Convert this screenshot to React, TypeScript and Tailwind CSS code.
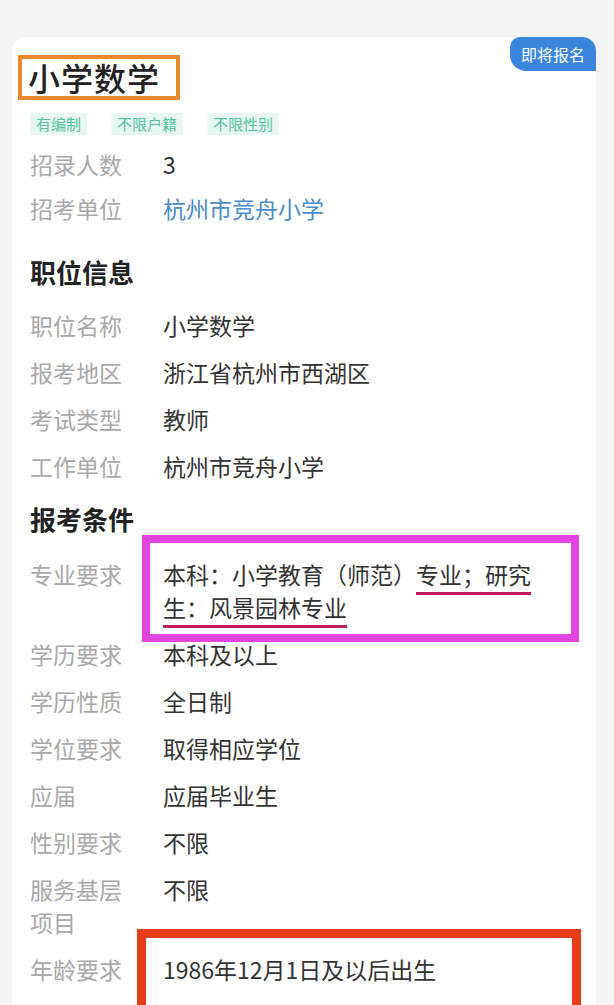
import { ReactNode } from "react";

const FONT = "font-['Noto_Sans_CJK_SC','Noto_Sans',sans-serif]";

function Row({
  label,
  children,
  className = "",
  overlay,
}: {
  label: string;
  children: ReactNode;
  className?: string;
  overlay?: ReactNode;
}) {
  return (
    <div className={`relative flex text-[23px] leading-[33px] ${className}`}>
      <div className="w-[96px] shrink-0 text-[#a8a8a8]">{label}</div>
      <div className="ml-[37px] w-[380px] text-[#333333]">{children}</div>
      {overlay}
    </div>
  );
}

const tags = ["有编制", "不限户籍", "不限性别"];

export default function App() {
  return (
    <div className={`min-h-screen overflow-hidden bg-[#f4f4f4] pl-[12px] pr-[18px] pt-[37px] ${FONT}`}>
      <div className="relative rounded-t-[14px] bg-white pb-10 pl-[18px]">
        {/* Top-right status badge */}
        <div className="absolute right-0 top-0 flex h-[34px] w-[86px] items-center justify-center rounded-tr-[14px] rounded-tl-[10px] rounded-bl-[16px] bg-[#3a86df] text-[16px] text-white">
          即将报名
        </div>

        {/* Title */}
        <div className="pt-[20px]">
          <div className="relative inline-block">
            <h1 className="ml-[-2px] text-[32px] font-medium leading-[40px] tracking-[1px] text-[#222222]">
              小学数学
            </h1>
            <div className="absolute left-[-12px] top-[-2px] h-[45px] w-[162px] border-[4px] border-[#e8892c]" />
          </div>
        </div>

        <div className="mt-[16px] flex gap-[24px]">
          {tags.map((t) => (
            <span
              key={t}
              className="h-[22px] bg-[#e9f7f2] px-[6px] text-[15px] leading-[22px] text-[#52c4a1]"
            >
              {t}
            </span>
          ))}
        </div>

        <div className="mt-[13px] flex flex-col gap-[11px]">
          <Row label="招录人数">3</Row>
          <Row label="招考单位">
            <span className="text-[#4a8dcc]">杭州市竞舟小学</span>
          </Row>
        </div>

        {/* 职位信息 */}
        <h2 className="mt-[30px] text-[26px] font-bold leading-[34px] text-[#222222]">职位信息</h2>
        <div className="mt-[20px] flex flex-col gap-[14px]">
          <Row label="职位名称">小学数学</Row>
          <Row label="报考地区">浙江省杭州市西湖区</Row>
          <Row label="考试类型">教师</Row>
          <Row label="工作单位">杭州市竞舟小学</Row>
        </div>

        {/* 报考条件 */}
        <h2 className="mt-[19px] text-[26px] font-bold leading-[34px] text-[#222222]">报考条件</h2>
        <div className="mt-[22px] flex flex-col gap-[14px]">
          <Row
            label="专业要求"
            overlay={
              <div className="pointer-events-none absolute left-[112px] top-[-23px] h-[107px] w-[437px] border-[8px] border-[#e244e0]" />
            }
          >
            本科：小学教育（师范）
            <span className="underline decoration-[#c41d5c] decoration-[3px] underline-offset-[8px]">
              专业；研究生：风景园林专业
            </span>
          </Row>
          <Row label="学历要求">本科及以上</Row>
          <Row label="学历性质">全日制</Row>
          <Row label="学位要求">取得相应学位</Row>
          <Row label="应届">应届毕业生</Row>
          <Row label="性别要求">不限</Row>
          <Row label="服务基层项目">不限</Row>
          <Row
            label="年龄要求"
            overlay={
              <div className="pointer-events-none absolute left-[107px] top-[-24px] h-[150px] w-[444px] border-[9px] border-[#e63d1a]" />
            }
          >
            1986年12月1日及以后出生
          </Row>
          <Row label="其他要求">
            <span className="text-[#bbbbbb]">具有相应层次及以上教师资格证书</span>
          </Row>
        </div>
      </div>
    </div>
  );
}
